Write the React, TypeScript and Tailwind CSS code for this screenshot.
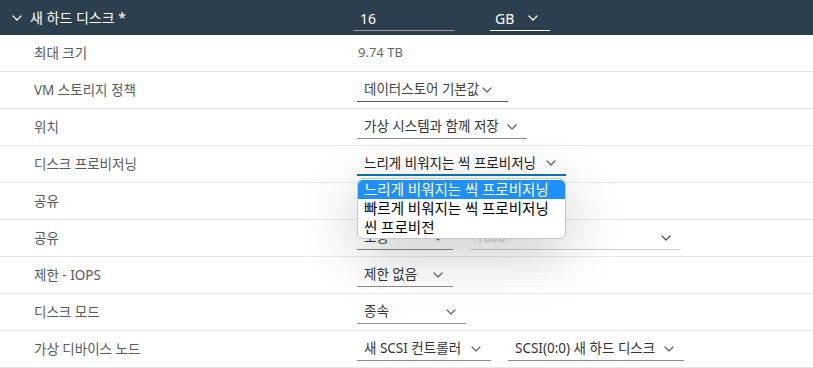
import React from 'react';

const font = { fontFamily: '"Noto Sans", "Noto Sans CJK KR", sans-serif' };

const Chevron = ({ className = '' }: { className?: string }) => (
    <svg width="10" height="6" viewBox="0 0 10 6" className={className} fill="none">
        <path d="M1 1l4 4 4-4" stroke="currentColor" strokeWidth="1.3" strokeLinecap="round" strokeLinejoin="round" />
    </svg>
);

const Select = ({ text, width, tight, border = 'border-[#8c8c8c]', color = 'text-[#333]' }: { text: string, width: string, tight?: boolean, border?: string, color?: string }) => (
    <div className={`h-6 flex items-center border-b ${border} ${width} ${tight ? 'gap-[3px]' : 'justify-between pr-[10px]'}`}>
        <span className={`pl-[7px] text-[13.5px] ${color} whitespace-nowrap`}>{text}</span>
        <Chevron className="text-[#666]" />
    </div>
);

const Row = ({ label, children }: { label: string, children?: React.ReactNode }) => (
    <div className="h-[37px] flex items-center border-b border-[#e8e8e8]">
        <div className="w-[357px] pl-[34px] text-[13.5px] text-[#5a5a5a]">{label}</div>
        <div className="flex items-center gap-[17px]">{children}</div>
    </div>
);

export default function App() {
    return (
        <div className="w-[813px] h-[368px] bg-white overflow-hidden" style={font}>
            {/* header */}
            <div className="h-[35px] bg-[#2b3f4f] flex items-center">
                <div className="w-[354px] flex items-center pl-[12px] gap-[8px]">
                    <Chevron className="text-white" />
                    <span className="text-[14px] text-white">새 하드 디스크 *</span>
                </div>
                <div className="w-[100px] h-6 flex items-center border-b border-[#9a9a9a] mt-[2px]">
                    <span className="pl-[6px] text-[14px] text-white">16</span>
                </div>
                <div className="ml-[36px] w-[60px] h-6 flex items-center justify-between pr-[12px] border-b border-white mt-[2px]">
                    <span className="pl-[5px] text-[14px] text-white">GB</span>
                    <Chevron className="text-white" />
                </div>
            </div>

            <Row label="최대 크기">
                <span className="pl-[1px] text-[13px] text-[#666]">9.74 TB</span>
            </Row>
            <Row label="VM 스토리지 정책">
                <Select text="데이터스토어 기본값" width="w-[151px]" tight border="border-[#555]" color="text-[#444]" />
            </Row>
            <Row label="위치">
                <Select text="가상 시스템과 함께 저장" width="w-[170px]" />
            </Row>
            <Row label="디스크 프로비저닝">
                <div className="relative">
                    <Select text="느리게 비워지는 씩 프로비저닝" width="w-[209px]" border="border-[#0079b8] border-b-2" color="text-[#222]" />
                    <div className="absolute left-0 top-[26px] w-[209px] bg-white rounded-[6px] border border-[#c8c8c8] shadow-[0_14px_55px_rgba(0,0,0,0.22)] z-10 py-[1px] text-[14.5px] leading-[19px]">
                        <div className="bg-[#1e90ff] text-white px-[6px] rounded-t-[5px] whitespace-nowrap">느리게 비워지는 씩 프로비저닝</div>
                        <div className="text-black px-[6px] whitespace-nowrap">빠르게 비워지는 씩 프로비저닝</div>
                        <div className="text-black px-[6px]">씬 프로비전</div>
                    </div>
                </div>
            </Row>
            <Row label="공유" />
            <Row label="공유">
                <Select text="보통" width="w-[96px]" />
                <div className="w-[211px] h-6 flex items-center justify-between pr-[10px] border-b border-[#cfcfcf]">
                    <span className="pl-[6px] text-[13px] text-[#c8c8c8]">1000</span>
                    <Chevron className="text-[#555]" />
                </div>
            </Row>
            <Row label="제한 - IOPS">
                <Select text="제한 없음" width="w-[96px]" />
            </Row>
            <Row label="디스크 모드">
                <Select text="종속" width="w-[109px]" />
            </Row>
            <Row label="가상 디바이스 노드">
                <Select text="새 SCSI 컨트롤러" width="w-[134px]" />
                <Select text="SCSI(0:0) 새 하드 디스크" width="w-[176px]" />
            </Row>
        </div>
    );
}
